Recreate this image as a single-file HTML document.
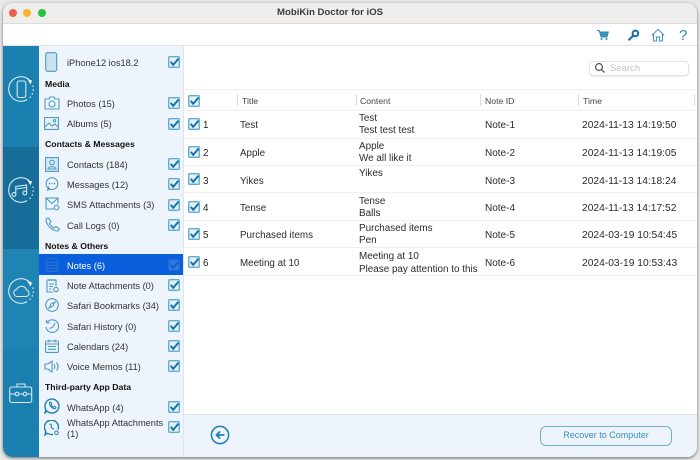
<!DOCTYPE html>
<html><head><meta charset="utf-8"><title>MobiKin Doctor for iOS</title>
<style>
html{background:#e8e8e8}
html,body{margin:0;padding:0;width:700px;height:460px;overflow:hidden}
body{font-family:"Liberation Sans",sans-serif;color:#2b2b2b;position:relative;background:#e8e8e8;filter:blur(.3px)}
div,svg{position:absolute}
.t{white-space:nowrap;font-size:9.8px;line-height:12px}
.h{white-space:nowrap;font-size:8.7px;line-height:12px;font-weight:bold;color:#111;left:45px}
.s{left:67px;color:#333;font-size:9.25px;margin-top:1px}
.cb{width:12px;height:12px}
.i{fill:none;stroke:#4a9ac2;stroke-width:1.1}
.wa{fill:none;stroke:#1f7fae;stroke-width:1.4}
.w{fill:none;stroke:#d6e9f3;stroke-width:1.1}
.l{height:1px;left:184px;width:513px;background:#eef0f2}
.sep{width:1px;height:12px;top:94px;background:#dcdcdc}
.hd{top:95px;font-size:8.7px;color:#444}
.c{font-size:9.9px}
.n{left:485px;font-size:10px}
.d{left:582px;font-size:10.25px}
</style></head>
<body>
<svg width="0" height="0" style="left:0;top:0"><defs>
<symbol id="c" viewBox="0 0 13 13"><rect x=".8" y=".8" width="11.4" height="11.4" rx="1" fill="#e3f0f8" stroke="#66abcf" stroke-width="1.5"/><path d="M3 6.3 5.6 9.6 11.4 2.8" fill="none" stroke="#0f72a8" stroke-width="2.1"/></symbol>
</defs></svg>

<div id="win" style="left:3px;top:3px;width:694px;height:454px;border-radius:10px;overflow:hidden;background:#fff;box-shadow:0 1px 3px rgba(0,0,0,.55)"></div>

<div style="left:3px;top:3px;width:694px;height:20px;background:#efeeed;border-radius:10px 10px 0 0;border-bottom:1px solid #dcdcdc"></div>
<div style="left:9px;top:9px;width:8px;height:8px;border-radius:50%;background:#ed5f56"></div>
<div style="left:23px;top:9px;width:8px;height:8px;border-radius:50%;background:#f5b42e"></div>
<div style="left:38px;top:9px;width:8px;height:8px;border-radius:50%;background:#27c13f"></div>
<div class="t" style="left:277px;top:7px;font-size:9.6px;font-weight:bold;color:#3c3c3c">MobiKin Doctor for iOS</div>

<div style="left:3px;top:45px;width:694px;height:1px;background:#e2e2e2"></div>

<svg style="left:596px;top:28px" width="14" height="14" viewBox="0 0 14 14"><path d="M1 2.5H3.2L5 9H11L12.3 4H4" fill="#3f94be" stroke="#2f88b5" stroke-width="1"/><circle cx="5.5" cy="11" r="1" fill="#2f88b5"/><circle cx="10.5" cy="11" r="1" fill="#2f88b5"/></svg>
<svg style="left:627px;top:29px" width="13" height="13" viewBox="0 0 13 13"><circle cx="8.4" cy="4.4" r="2.8" fill="none" stroke="#1670a8" stroke-width="2"/><path d="M6.2 6.6 1.5 11.3" stroke="#1670a8" stroke-width="2.1"/></svg>
<svg style="left:651px;top:28px" width="14" height="14" viewBox="0 0 14 14"><path d="M.8 7.4 7 1.4 13.2 7.4M2.5 6V13H5.6V9H8.4V13H11.5V6" fill="none" stroke="#3c8fb9" stroke-width="1"/></svg>
<div style="left:679px;top:27px;font-size:15px;line-height:17px;color:#2f88b5">?</div>

<!-- left strip -->
<div style="left:3px;top:46px;width:36px;height:411px;background:#1b80b0;border-radius:0 0 0 10px"></div>
<div style="left:3px;top:147px;width:36px;height:102px;background:#176d99"></div>
<div style="left:3px;top:249px;width:36px;height:100px;background:#1f84b4"></div>

<svg style="left:8px;top:76px" width="26" height="26" viewBox="0 0 26 26"><path d="M21.7 4.3A12.3 12.3 0 1 0 19.15 23.65" class="w"/><path d="M24.8 9.5A12.3 12.3 0 0 1 21.7 21.7" class="w" stroke-dasharray="1.5 2.4" style="stroke-width:1.3"/><path d="M19.3 3 24 4.5 22.5 8.5Z" fill="#eef6fa"/><rect x="9.2" y="5" width="8.6" height="16.5" rx="2" class="w"/></svg>
<svg style="left:8px;top:177px" width="26" height="26" viewBox="0 0 26 26"><path d="M21.7 4.3A12.3 12.3 0 1 0 19.15 23.65" class="w"/><path d="M24.8 9.5A12.3 12.3 0 0 1 21.7 21.7" class="w" stroke-dasharray="1.5 2.4" style="stroke-width:1.3"/><path d="M19.3 3 24 4.5 22.5 8.5Z" fill="#eef6fa"/><path d="M7.8 17V9.5L18.6 8V15.5M7.8 12 18.6 10.5" class="w"/><circle cx="6" cy="17.5" r="1.9" class="w"/><circle cx="16.8" cy="16" r="1.9" class="w"/></svg>
<svg style="left:8px;top:278px" width="26" height="26" viewBox="0 0 26 26"><path d="M21.7 4.3A12.3 12.3 0 1 0 19.15 23.65" class="w"/><path d="M24.8 9.5A12.3 12.3 0 0 1 21.7 21.7" class="w" stroke-dasharray="1.5 2.4" style="stroke-width:1.3"/><path d="M19.3 3 24 4.5 22.5 8.5Z" fill="#eef6fa"/><path d="M8.5 18.5H18A3.3 3.3 0 0 0 18.6 12 5.3 5.3 0 0 0 8.8 11.3 3.7 3.7 0 0 0 8.5 18.5Z" class="w"/></svg>
<svg style="left:9px;top:382px" width="24" height="22" viewBox="0 0 24 22"><rect x=".7" y="5" width="22" height="15.5" rx="2" class="w"/><path d="M8 5V2H16V5M1 12H6M10 12H14M18 12H23" class="w"/><circle cx="8" cy="12" r="1.8" class="w"/><circle cx="16" cy="12" r="1.8" class="w"/></svg>

<!-- sidebar -->
<div style="left:39px;top:46px;width:144px;height:411px;background:#eef4fb"></div>
<div style="left:183px;top:46px;width:1px;height:411px;background:#dfe5ea"></div>
<div style="left:39px;top:254px;width:144px;height:21px;background:#0a5fdc"></div>

<svg style="left:45px;top:52px" width="13" height="20" viewBox="0 0 13 20"><rect x=".7" y=".7" width="11" height="18.6" rx="2" fill="#c9e2f0" stroke="#4a9ac2" stroke-width="1.1"/></svg>
<div class="t s" style="top:56px">iPhone12 ios18.2</div>
<svg class="cb" style="left:168px;top:56px"><use href="#c"/></svg>

<div class="h" style="top:78px">Media</div>
<svg class="i" style="left:44px;top:96px" width="16" height="14" viewBox="0 0 16 14"><path d="M1 3H5L6 1H10L11 3H15V13H1Z"/><circle cx="8" cy="8" r="3"/></svg>
<div class="t s" style="top:97px">Photos (15)</div>
<svg class="cb" style="left:168px;top:97px"><use href="#c"/></svg>
<svg class="i" style="left:44px;top:117px" width="15" height="13" viewBox="0 0 15 13"><rect x=".6" y=".6" width="13.8" height="11.8"/><path d="M1 10 5 6 8 9 11 7 14 10"/><circle cx="10.5" cy="3.8" r="1.2"/></svg>
<div class="t s" style="top:117px">Albums (5)</div>
<svg class="cb" style="left:168px;top:118px"><use href="#c"/></svg>

<div class="h" style="top:138px">Contacts &amp; Messages</div>
<svg class="i" style="left:45px;top:157px" width="14" height="15" viewBox="0 0 14 15"><rect x=".6" y=".6" width="12.8" height="13.8" fill="#d8eaf4"/><circle cx="7" cy="5.5" r="2.3"/><path d="M3 12C3 9 11 9 11 12Z"/></svg>
<div class="t s" style="top:158px">Contacts (184)</div>
<svg class="cb" style="left:168px;top:158px"><use href="#c"/></svg>
<svg class="i" style="left:45px;top:177px" width="14" height="14" viewBox="0 0 14 14"><circle cx="7" cy="6.6" r="5.9"/><path d="M4 9.5 2.5 13 6 12"/><path d="M4 6.6H5M6.5 6.6H7.5M9 6.6H10" stroke-width="1.4" stroke="#1c76a8"/></svg>
<div class="t s" style="top:178px">Messages (12)</div>
<svg class="cb" style="left:168px;top:178px"><use href="#c"/></svg>
<svg class="i" style="left:45px;top:197px" width="15" height="14" viewBox="0 0 15 14"><path d="M1 1H13V7M9 12H1V1L7 6.5 13 1"/><circle cx="11.5" cy="10.5" r="2.3"/></svg>
<div class="t s" style="top:198px">SMS Attachments (3)</div>
<svg class="cb" style="left:168px;top:199px"><use href="#c"/></svg>
<svg class="i" style="left:45px;top:217px" width="15" height="15" viewBox="0 0 15 15"><path d="M1 2 3.5 1 6 4.5 4.5 6.5C5.5 8.5 7 10 9 11L11 9.5 14.5 12 13 14C7 14 1 8 1 2Z"/></svg>
<div class="t s" style="top:219px">Call Logs (0)</div>
<svg class="cb" style="left:168px;top:219px"><use href="#c"/></svg>

<div class="h" style="top:240px">Notes &amp; Others</div>
<svg class="i" style="left:46px;top:258px;stroke:#2a71cf" width="12" height="14" viewBox="0 0 12 14"><rect x=".6" y=".6" width="10.8" height="12.8" rx="1"/><path d="M1 4.5H11M1 7.5H11M1 10.5H11"/></svg>
<div class="t s" style="top:259px;color:#fff">Notes (6)</div>
<svg class="cb" style="left:168px;top:259px;opacity:.18"><use href="#c"/></svg>
<svg class="i" style="left:46px;top:278px" width="13" height="15" viewBox="0 0 13 15"><path d="M1 2H10V8M7 14H1V2M3 1V3M5.5 1V3M8 1V3M3 6H8M3 8.5H7M3 11H5.5"/><circle cx="10" cy="11.5" r="2.2"/></svg>
<div class="t s" style="top:279px">Note Attachments (0)</div>
<svg class="cb" style="left:168px;top:279px"><use href="#c"/></svg>
<svg class="i" style="left:45px;top:298px" width="14" height="14" viewBox="0 0 14 14"><circle cx="7" cy="7" r="6.3"/><path d="M10 4 8 8 4 10 6 6Z"/></svg>
<div class="t s" style="top:299px">Safari Bookmarks (34)</div>
<svg class="cb" style="left:168px;top:299px"><use href="#c"/></svg>
<svg class="i" style="left:45px;top:319px" width="14" height="14" viewBox="0 0 14 14"><path d="M2.5 3A6.3 6.3 0 1 1 1 8"/><path d="M1.5 1V3.8H4.5M10 4 8 8 4.5 9.5"/></svg>
<div class="t s" style="top:320px">Safari History (0)</div>
<svg class="cb" style="left:168px;top:320px"><use href="#c"/></svg>
<svg class="i" style="left:45px;top:339px" width="14" height="14" viewBox="0 0 14 14"><rect x=".6" y="2" width="12.8" height="11.4" rx="1"/><path d="M.6 5H13.4M4 .5V3.5M10 .5V3.5M3 7.5H11M3 10.3H11"/></svg>
<div class="t s" style="top:340px">Calendars (24)</div>
<svg class="cb" style="left:168px;top:340px"><use href="#c"/></svg>
<svg class="i" style="left:44px;top:360px" width="16" height="13" viewBox="0 0 16 13"><path d="M1 4H4L8 1V12L4 9H1ZM10 4C11 5.5 11 7.5 10 9M12.5 2.5C14.5 5 14.5 8 12.5 10.5"/></svg>
<div class="t s" style="top:360px">Voice Memos (11)</div>
<svg class="cb" style="left:168px;top:360px"><use href="#c"/></svg>

<div class="h" style="top:381px">Third-party App Data</div>
<svg class="wa" style="left:44px;top:398px" width="16" height="16" viewBox="0 0 16 16"><path d="M3 13 1 15 1.8 11.4A7 7 0 1 1 3 13Z"/><path d="M5.5 4.5 6.8 4 7.8 6 7 7C7.5 8 8.3 8.7 9.2 9.2L10.2 8.3 12 9.5 11.3 10.7C8 10.7 5.5 8 5.5 4.5Z" style="stroke-width:1"/></svg>
<div class="t s" style="top:401px">WhatsApp (4)</div>
<svg class="cb" style="left:168px;top:401px"><use href="#c"/></svg>
<svg class="wa" style="left:44px;top:420px" width="16" height="16" viewBox="0 0 16 16"><path d="M3 13 1 15 1.8 11.4A7 7 0 1 1 14 9.5M3 13C5 14.5 7 14.8 9 14.3"/><path d="M5.5 4.5 6.8 4 7.8 6 7 7C7.5 8 8.3 8.7 9.2 9.2L10.2 8.3" style="stroke-width:1"/><circle cx="12.5" cy="12.8" r="1.8" style="stroke-width:1"/></svg>
<div class="t s" style="top:416px">WhatsApp Attachments</div>
<div class="t s" style="top:427px">(1)</div>
<svg class="cb" style="left:168px;top:421px"><use href="#c"/></svg>

<!-- search -->
<div style="left:589px;top:61px;width:98px;height:13px;border:1px solid #e2e2e2;border-radius:4px;background:#fff;box-shadow:0 1px 1px rgba(0,0,0,.08)"></div>
<svg style="left:594px;top:62px" width="12" height="12" viewBox="0 0 12 12"><circle cx="5" cy="5" r="3.4" fill="none" stroke="#444" stroke-width="1.1"/><path d="M7.5 7.5 10.5 10.5" stroke="#444" stroke-width="1.2"/></svg>
<div class="t" style="left:610px;top:63px;font-size:9.5px;color:#c3c3c3">Search</div>

<!-- table -->
<div class="l" style="top:89px"></div>
<div class="l" style="top:110px"></div>
<div class="l" style="top:138px"></div>
<div class="l" style="top:165px"></div>
<div class="l" style="top:192px"></div>
<div class="l" style="top:220px"></div>
<div class="l" style="top:247px"></div>
<div class="l" style="top:275px"></div>
<div class="sep" style="left:237px"></div>
<div class="sep" style="left:356px"></div>
<div class="sep" style="left:480px"></div>
<div class="sep" style="left:578px"></div>
<div class="sep" style="left:694px"></div>
<svg class="cb" style="left:188px;top:95px"><use href="#c"/></svg>
<div class="t hd" style="left:242px">Title</div>
<div class="t hd" style="left:360px">Content</div>
<div class="t hd" style="left:485px">Note ID</div>
<div class="t hd" style="left:583px">Time</div>

<svg class="cb" style="left:188px;top:118px"><use href="#c"/></svg>
<div class="t" style="left:203px;top:120px;color:#222">1</div>
<div class="t" style="left:240px;top:120px">Test</div>
<div class="t c" style="left:359px;top:113px">Test</div>
<div class="t c" style="left:359px;top:125px">Test test test</div>
<div class="t n" style="top:120px">Note-1</div>
<div class="t d" style="top:120px">2024-11-13 14:19:50</div>

<svg class="cb" style="left:188px;top:146px"><use href="#c"/></svg>
<div class="t" style="left:203px;top:148px;color:#222">2</div>
<div class="t" style="left:240px;top:148px">Apple</div>
<div class="t c" style="left:359px;top:141px">Apple</div>
<div class="t c" style="left:359px;top:153px">We all like it</div>
<div class="t n" style="top:148px">Note-2</div>
<div class="t d" style="top:148px">2024-11-13 14:19:05</div>

<svg class="cb" style="left:188px;top:173px"><use href="#c"/></svg>
<div class="t" style="left:203px;top:176px;color:#222">3</div>
<div class="t" style="left:240px;top:176px">Yikes</div>
<div class="t c" style="left:359px;top:168px">Yikes</div>
<div class="t n" style="top:176px">Note-3</div>
<div class="t d" style="top:176px">2024-11-13 14:18:24</div>

<svg class="cb" style="left:188px;top:201px"><use href="#c"/></svg>
<div class="t" style="left:203px;top:203px;color:#222">4</div>
<div class="t" style="left:240px;top:203px">Tense</div>
<div class="t c" style="left:359px;top:196px">Tense</div>
<div class="t c" style="left:359px;top:208px">Balls</div>
<div class="t n" style="top:203px">Note-4</div>
<div class="t d" style="top:203px">2024-11-13 14:17:52</div>

<svg class="cb" style="left:188px;top:228px"><use href="#c"/></svg>
<div class="t" style="left:203px;top:230px;color:#222">5</div>
<div class="t" style="left:240px;top:230px">Purchased items</div>
<div class="t c" style="left:359px;top:223px">Purchased items</div>
<div class="t c" style="left:359px;top:235px">Pen</div>
<div class="t n" style="top:230px">Note-5</div>
<div class="t d" style="top:230px">2024-03-19 10:54:45</div>

<svg class="cb" style="left:188px;top:256px"><use href="#c"/></svg>
<div class="t" style="left:203px;top:258px;color:#222">6</div>
<div class="t" style="left:240px;top:258px">Meeting at 10</div>
<div class="t c" style="left:359px;top:251px">Meeting at 10</div>
<div class="t c" style="left:359px;top:264px">Please pay attention to this</div>
<div class="t n" style="top:258px">Note-6</div>
<div class="t d" style="top:258px">2024-03-19 10:53:43</div>

<!-- footer -->
<div style="left:184px;top:414px;width:513px;height:43px;background:#eef4fb;border-top:1px solid #e3e6e9;box-sizing:border-box;border-radius:0 0 10px 0"></div>
<svg style="left:210px;top:425px" width="20" height="20" viewBox="0 0 20 20"><circle cx="10" cy="10" r="8.6" fill="none" stroke="#1b7fae" stroke-width="1.5"/><path d="M14.5 10H6.5M10 6.5 6.5 10 10 13.5" fill="none" stroke="#1b7fae" stroke-width="1.8"/></svg>
<div style="left:540px;top:426px;width:130px;height:18px;border:1px solid #6fb0d0;border-radius:6px"></div>
<div class="t" style="left:540px;width:132px;text-align:center;top:429px;font-size:9px;color:#3a8db8">Recover to Computer</div>
</body></html>
